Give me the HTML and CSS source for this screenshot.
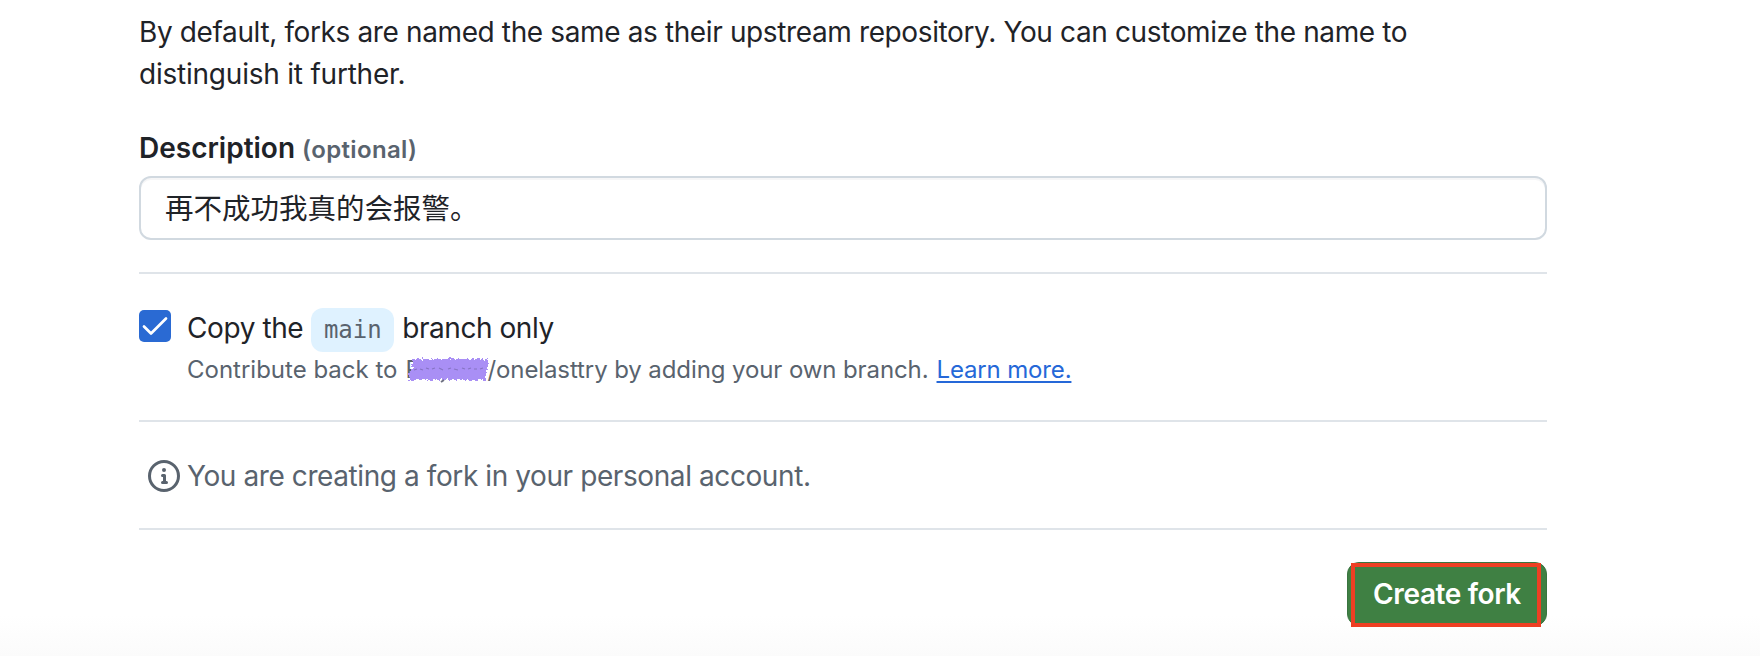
FILE: index.html
```html
<!DOCTYPE html>
<html lang="en">
<head>
<meta charset="utf-8">
<title>Create a new fork</title>
<link rel="stylesheet" href="styles.css">
</head>
<body>
<main class="form">
  <p class="hint"><span class="hint-first">By default, forks are named the same as their upstream repository. You can customize the name to</span> <br><span class="hint-second">distinguish it further.</span></p>
  <label class="label" for="description"><span class="label-name">Description</span><span class="label-note">(optional)</span></label>
  <input class="input" id="description" type="text" value="再不成功我真的会报警。">
  <section class="option">
    <svg class="checkbox" viewBox="0 0 32 32" role="img" aria-label="Checked">
      <rect width="32" height="32" rx="5" fill="#2a6ad3"/>
      <path d="M5 16.500 12 23.500 27 8.500" fill="none" stroke="#fff" stroke-width="2.700" stroke-linecap="round" stroke-linejoin="round"/>
    </svg>
    <div class="option-body">
      <div class="option-title"><span class="copy">Copy the</span><code class="branch">main</code><span class="only">branch only</span></div>
      <div class="option-note">
        <span class="contribute">Contribute back to</span>
        <span class="owner">P
          <svg class="scribble" viewBox="0 0 84 28" aria-hidden="true">
            <filter id="rough" x="-5%" y="-15%" width="110%" height="130%">
              <feTurbulence type="fractalNoise" baseFrequency=".35 .3" numOctaves="2" seed="4"/>
              <feDisplacementMap in="SourceGraphic" scale="6" xChannelSelector="R" yChannelSelector="G"/>
            </filter>
            <path d="M6 3H82V14H80V24H3V14H6z" fill="#a98ff5" filter="url(#rough)"/>
            <path d="M8 14l3-1M14 13l3 1M20 12l3 1M26 13l3-1M33 12l4 2M42 13l3-1M48 13l4 1M56 12l3 1M62 13l3-1M68 13l3 0M74 13l3-1" fill="none" stroke="#8674c4" stroke-width="1.200"/>
            <path d="M35 26l3-2" stroke="#6d7080" stroke-width="2"/>
          </svg>
        </span>
        <span class="repo">/onelasttry by adding your own branch.</span>
        <a class="link" href="#">Learn more.</a>
      </div>
    </div>
  </section>
  <section class="notice">
    <svg class="info" viewBox="0 0 16 16" aria-hidden="true"><path fill="#59636e" d="M0 8a8 8 0 1 1 16 0A8 8 0 0 1 0 8Zm8-6.500a6.500 6.500 0 1 0 0 13 6.500 6.500 0 0 0 0-13ZM6.500 7.750A.75.75 0 0 1 7.250 7h1a.75.75 0 0 1 .75.75v2.750h.25a.75.75 0 0 1 0 1.500h-2a.75.75 0 0 1 0-1.500h.25v-2h-.25a.75.75 0 0 1-.75-.75ZM8 6a1 1 0 1 1 0-2 1 1 0 0 1 0 2Z"/></svg>
    <span class="notice-text">You are creating a fork in your personal account.</span>
  </section>
  <div class="actions">
    <button class="submit" type="button">Create fork</button>
  </div>
</main>
</body>
</html>
```
FILE: styles.css
```css
*, *::after { box-sizing: border-box; }
body {
  margin: 0;
  height: 656px;
  overflow: hidden;
  background: linear-gradient(#fff 615px, #fbfbfb 656px);
  color: #1f2328;
  font: 28px/42px Inter, "Noto Sans CJK SC", sans-serif;
  white-space: nowrap;
}
.form {
  width: 1408px;
  margin-left: 139px;
  padding-top: 11px;
}
.hint { margin: 0 0 32px; }
.hint-first { letter-spacing: -.375px; }
.hint-second { letter-spacing: -.22px; }
.label {
  display: flex;
  align-items: baseline;
  gap: 7px;
  height: 42px;
  margin-bottom: 7px;
  font-weight: 600;
}
.label-note { font-size: 24px; letter-spacing: .35px; color: #59636e; }
.input {
  display: block;
  width: 100%;
  height: 64px;
  padding: 0 24px 3px;
  border: 2px solid #d1d9e0;
  border-radius: 12px;
  background: #fff;
  box-shadow: inset 0 2px 0 rgba(31, 35, 40, .04);
  color: #1f2328;
  font: 28.500px/40px "Noto Sans CJK SC", sans-serif;
}
.option {
  display: flex;
  gap: 16px;
  height: 148px;
  margin-top: 32px;
  padding-top: 33px;
  border-top: 2px solid #dfe4e9;
}
.checkbox { width: 32px; height: 32px; margin-top: 3px; }
.option-title { display: flex; height: 45px; }
.copy { letter-spacing: -.4px; }
.only { letter-spacing: -.45px; }
.branch {
  width: 83px;
  height: 44px;
  margin: 1px 8px 0;
  border-radius: 12px;
  background: #dff2ff;
  color: #59636e;
  font: 24px/44px "DejaVu Sans Mono", monospace;
  text-align: center;
}
.option-note {
  display: flex;
  color: #59636e;
  font-size: 24px;
  line-height: 36px;
}
.owner { position: relative; width: 82px; margin-left: 8px; }
.scribble { position: absolute; left: 1px; top: 4px; width: 84px; height: 28px; overflow: visible; }
.repo { letter-spacing: -.1px; }
.link { margin-left: 8px; letter-spacing: -.15px; color: #2568d8; text-underline-offset: 3px; text-decoration-thickness: 2px; }
.notice {
  display: flex;
  gap: 7px;
  height: 108px;
  padding: 33px 0 0 9px;
  border-top: 2px solid #dfe4e9;
  color: #59636e;
}
.notice-text { letter-spacing: -.41px; }
.info { width: 32px; height: 32px; margin-top: 5px; }
.actions {
  display: flex;
  justify-content: flex-end;
  padding-top: 32px;
  border-top: 2px solid #dfe4e9;
}
.submit {
  position: relative;
  width: 200px;
  height: 64px;
  padding: 0;
  border: 1px solid #397440;
  border-radius: 12px;
  background: #3f8043;
  color: #fff;
  font: 600 28px/60px Inter, sans-serif;
  letter-spacing: -.38px;
}
.submit::after {
  content: "";
  position: absolute;
  left: 3px;
  top: 0;
  width: 190px;
  height: 64px;
  border: 4px solid #ee3f23;
}
```
